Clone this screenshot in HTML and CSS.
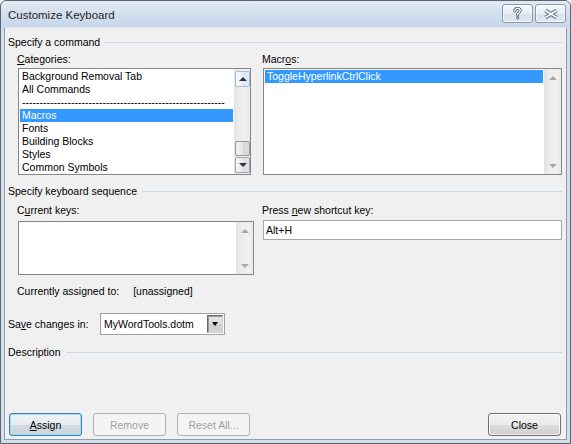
FILE: index.html
```html
<!DOCTYPE html>
<html lang="en">
<head>
<meta charset="utf-8">
<title>Customize Keyboard</title>
<link rel="stylesheet" href="styles.css">
</head>
<body>
<div class="window">
  <div class="titlebar">
    <span class="title">Customize Keyboard</span>
    <div class="caption-btns">
      <button class="cap-btn" aria-label="Help">
        <svg width="9" height="13" viewBox="0 0 9 13">
          <g fill="none" stroke-linecap="round" stroke-linejoin="round">
            <path d="M1.8 4 C1.8 2.1 3.1 1.4 4.5 1.4 C6 1.4 7.2 2.3 7.2 3.7 C7.2 5.3 4.7 5.6 4.7 7.3 L4.7 7.9 M4.7 10.8 L4.7 10.9" stroke="#56657a" stroke-width="3"/>
            <path d="M1.8 4 C1.8 2.1 3.1 1.4 4.5 1.4 C6 1.4 7.2 2.3 7.2 3.7 C7.2 5.3 4.7 5.6 4.7 7.3 L4.7 7.9 M4.7 10.8 L4.7 10.9" stroke="#ffffff" stroke-width="1.3"/>
          </g>
        </svg>
      </button>
      <button class="cap-btn" aria-label="Close">
        <svg width="16" height="10" viewBox="0 0 16 10">
          <g fill="none">
            <path d="M2.5 1.5 L13.5 8.5 M13.5 1.5 L2.5 8.5" stroke="#56657a" stroke-width="3.8"/>
            <path d="M2.5 1.5 L13.5 8.5 M13.5 1.5 L2.5 8.5" stroke="#ffffff" stroke-width="1.8"/>
          </g>
        </svg>
      </button>
    </div>
  </div>

  <div class="client">
    <div class="group-head">Specify a command</div>
    <div class="cols cmd-row">
      <div class="field">
        <div class="label"><u>C</u>ategories:</div>
        <div class="listbox cat-list">
          <ul class="items">
            <li>Background Removal Tab</li>
            <li>All Commands</li>
            <li>----------------------------------------------------------</li>
            <li class="sel">Macros</li>
            <li>Fonts</li>
            <li>Building Blocks</li>
            <li>Styles</li>
            <li>Common Symbols</li>
          </ul>
          <div class="vscroll narrow">
            <span class="sb-btn up-btn"><i class="arrow up"></i></span>
            <span class="sb-space"></span>
            <span class="sb-thumb"></span>
            <span class="sb-btn down-btn"><i class="arrow down"></i></span>
          </div>
        </div>
      </div>
      <div class="field">
        <div class="label">Macr<u>o</u>s:</div>
        <div class="listbox mac-list">
          <ul class="items">
            <li class="sel">ToggleHyperlinkCtrlClick</li>
          </ul>
          <div class="vscroll">
            <span class="sb-dis"><i class="arrow up dis"></i></span>
            <span class="sb-space"></span>
            <span class="sb-dis"><i class="arrow down dis"></i></span>
          </div>
        </div>
      </div>
    </div>

    <div class="group-head seq-head">Specify keyboard sequence</div>
    <div class="cols keys-row">
      <div class="field">
        <div class="label lbl-keys">C<u>u</u>rrent keys:</div>
        <div class="listbox keys-list">
          <ul class="items"></ul>
          <div class="vscroll">
            <span class="sb-dis"><i class="arrow up dis"></i></span>
            <span class="sb-space"></span>
            <span class="sb-dis"><i class="arrow down dis"></i></span>
          </div>
        </div>
      </div>
      <div class="field">
        <div class="label lbl-new">Press <u>n</u>ew shortcut key:</div>
        <div class="textbox">Alt+H</div>
      </div>
    </div>

    <div class="assigned">
      <span>Currently assigned to:</span>
      <span>[unassigned]</span>
    </div>

    <div class="save-row">
      <span class="save-lbl">Sa<u>v</u>e changes in:</span>
      <div class="combo">
        <span class="combo-text">MyWordTools.dotm</span>
        <span class="combo-btn"><i class="arrow down black"></i></span>
      </div>
    </div>

    <div class="group-head desc-head">Description</div>

    <div class="buttons">
      <button class="btn default"><u>A</u>ssign</button>
      <button class="btn" disabled>Remove</button>
      <button class="btn" disabled>Reset All...</button>
      <button class="btn close-btn">Close</button>
    </div>
  </div>
</div>
</body>
</html>
```

FILE: styles.css
```css
html, body {
  margin: 0;
  padding: 0;
  background: #ffffff;
}

body {
  font-family: "Liberation Sans", Arial, sans-serif;
  font-size: 10.5px;
  color: #000;
}

.window {
  width: 571px;
  height: 444px;
  box-sizing: border-box;
  border: 1px solid #5b6470;
  border-radius: 6px 6px 0 0;
  background: #d3deeb;
  padding: 0 3px 3px;
  display: flex;
  flex-direction: column;
  overflow: hidden;
}

/* ---------- title bar ---------- */
.titlebar {
  margin: 0 -3px;
  height: 26px;
  flex: none;
  display: flex;
  align-items: flex-start;
  justify-content: space-between;
  padding: 0 4px 0 7px;
  background: linear-gradient(#e1e9f4, #c6d6e9);
  border-radius: 5px 5px 0 0;
}

.title {
  margin-top: 7px;
  line-height: 14px;
  font-size: 11.5px;
  color: #262626;
}

.caption-btns {
  display: flex;
  gap: 2px;
  margin-top: 3px;
}

.cap-btn {
  width: 31px;
  height: 19px;
  box-sizing: border-box;
  border: 1px solid #8898ad;
  border-radius: 3px;
  padding: 0;
  margin: 0;
  display: flex;
  align-items: center;
  justify-content: center;
  background: linear-gradient(#f6f8fb, #e6edf5 50%, #d6e1ed 51%, #e0e8f2);
  box-shadow: inset 0 0 0 1px rgba(255, 255, 255, 0.6);
}

.cap-btn svg {
  display: block;
}

/* ---------- client area ---------- */
.client {
  flex: 1;
  min-height: 0;
  display: flex;
  flex-direction: column;
  background: #f0f0f0;
  border: 1px solid #909cab;
  border-top-color: #dfe6ee;
  padding: 8px 4px 3px 3px;
}

.group-head {
  display: flex;
  align-items: center;
  height: 13px;
  line-height: 13px;
  white-space: nowrap;
}

.group-head::after {
  content: "";
  flex: 1;
  height: 1px;
  margin-left: 5px;
  background: #cdd8e4;
}

.seq-head {
  margin-top: 10px;
}

.desc-head {
  margin-top: 11px;
}

.cols {
  display: grid;
  grid-template-columns: 236px 1fr;
  column-gap: 9px;
  padding-left: 10px;
}

.field {
  display: flex;
  flex-direction: column;
  min-width: 0;
}

.label {
  line-height: 13px;
  margin-left: -1px;
  white-space: nowrap;
}

.cmd-row .label {
  margin-top: 4px;
  margin-bottom: 2px;
}

.keys-row .label {
  margin-top: 6px;
}

.lbl-keys {
  margin-bottom: 4px;
}

.lbl-new {
  margin-bottom: 3px;
}

/* ---------- list boxes ---------- */
.listbox {
  display: flex;
  box-sizing: border-box;
  border: 1px solid #828790;
  background: #fff;
  overflow: hidden;
}

.cat-list {
  width: 233px;
  height: 107px;
}

.mac-list {
  height: 107px;
}

.keys-list {
  height: 54px;
}

.items {
  list-style: none;
  margin: 0;
  padding: 1px;
  flex: 1;
  min-width: 0;
  overflow: hidden;
}

.items li {
  height: 13px;
  line-height: 13px;
  padding-left: 2px;
  white-space: nowrap;
  overflow: hidden;
}

.items li.sel {
  background: #3399ff;
  color: #fff;
}

.vscroll {
  width: 17px;
  flex: none;
  display: flex;
  flex-direction: column;
  background: linear-gradient(to right, #e2e2e2, #ececec 30%, #f1f1f1 70%, #e9e9e9);
}

.vscroll.narrow {
  width: 16px;
}

.sb-space {
  flex: 1;
}

.sb-btn {
  box-sizing: border-box;
  margin: 0 0 0 1px;
  width: 15px;
  height: 16px;
  border-radius: 2px;
  display: flex;
  align-items: center;
  justify-content: center;
  border: 1px solid #9fa4aa;
  background: linear-gradient(to right, #f6f6f6, #ebebeb 50%, #dcdcdc 51%, #e4e4e4);
}

.up-btn {
  margin-top: 2px;
  border-color: #a8bcd3;
  background: linear-gradient(to right, #f7fafd, #e9f1f9 50%, #dae6f2 51%, #e3ecf6);
}

.down-btn {
  margin-bottom: 1px;
}

.sb-thumb {
  box-sizing: border-box;
  margin: 0 0 1px 1px;
  width: 15px;
  height: 15px;
  border: 1px solid #979797;
  border-radius: 2px;
  background: linear-gradient(to right, #f2f2f2, #e6e6e6 50%, #d6d6d6 51%, #dddddd);
}

.sb-dis {
  height: 17px;
  display: flex;
  align-items: center;
  justify-content: center;
}

.arrow {
  display: block;
  width: 0;
  height: 0;
  border-left: 4px solid transparent;
  border-right: 4px solid transparent;
}

.arrow.up {
  border-bottom: 4px solid #2c3648;
}

.arrow.down {
  border-top: 4px solid #2c3648;
}

.arrow.up.dis {
  border-bottom-color: #a8a8a8;
}

.arrow.down.dis {
  border-top-color: #a8a8a8;
}

.arrow.down.black {
  border-left-width: 3.5px;
  border-right-width: 3.5px;
  border-top: 4px solid #000;
}

/* ---------- text box ---------- */
.textbox {
  height: 20px;
  box-sizing: border-box;
  border: 1px solid #a7a7a7;
  background: #fff;
  padding-left: 2px;
  line-height: 18px;
  white-space: nowrap;
}

.assigned {
  margin-top: 10px;
  padding-left: 9px;
  display: flex;
  gap: 14px;
  line-height: 13px;
}

/* ---------- save row ---------- */
.save-row {
  margin-top: 15px;
  display: flex;
  align-items: center;
}

.save-lbl {
  width: 92px;
  line-height: 13px;
}

.combo {
  width: 125px;
  height: 22px;
  box-sizing: border-box;
  border: 1px solid #a2a2a2;
  background: #fff;
  padding: 1px;
  display: flex;
  align-items: center;
}

.combo-text {
  flex: 1;
  padding-left: 2px;
  line-height: 13px;
  white-space: nowrap;
}

.combo-btn {
  box-sizing: border-box;
  width: 16px;
  height: 18px;
  display: flex;
  align-items: center;
  justify-content: center;
  border: 1px solid;
  border-color: #6a6a6a #cfcfcf #cfcfcf #6a6a6a;
  background: linear-gradient(#e6e6e6, #dcdcdc 50%, #cdcdcd 51%, #d6d6d6);
  box-shadow: inset 1px 1px 0 #9a9a9a;
}

/* ---------- buttons ---------- */
.buttons {
  margin-top: auto;
  display: flex;
  gap: 11px;
  padding: 0 1px;
}

.btn {
  width: 73px;
  height: 23px;
  box-sizing: border-box;
  margin: 0;
  padding: 0;
  font-family: inherit;
  font-size: 10.5px;
  color: #000;
  border: 1px solid #707070;
  border-radius: 3px;
  background: linear-gradient(#f2f2f2, #ebebeb 50%, #dddddd 51%, #cfcfcf);
  box-shadow: inset 0 0 0 1px rgba(255, 255, 255, 0.75);
}

.btn.default {
  border-color: #3c7fb1;
  box-shadow: inset 0 0 0 1px #9fdcf7;
  background: linear-gradient(#eef3f6, #e6ecf0 50%, #d6dde2 51%, #c8d2d9);
}

.btn:disabled {
  color: #a0a0a0;
  border-color: #adb2b5;
  background: #f4f4f4;
  box-shadow: none;
}

.close-btn {
  margin-left: auto;
}
```
